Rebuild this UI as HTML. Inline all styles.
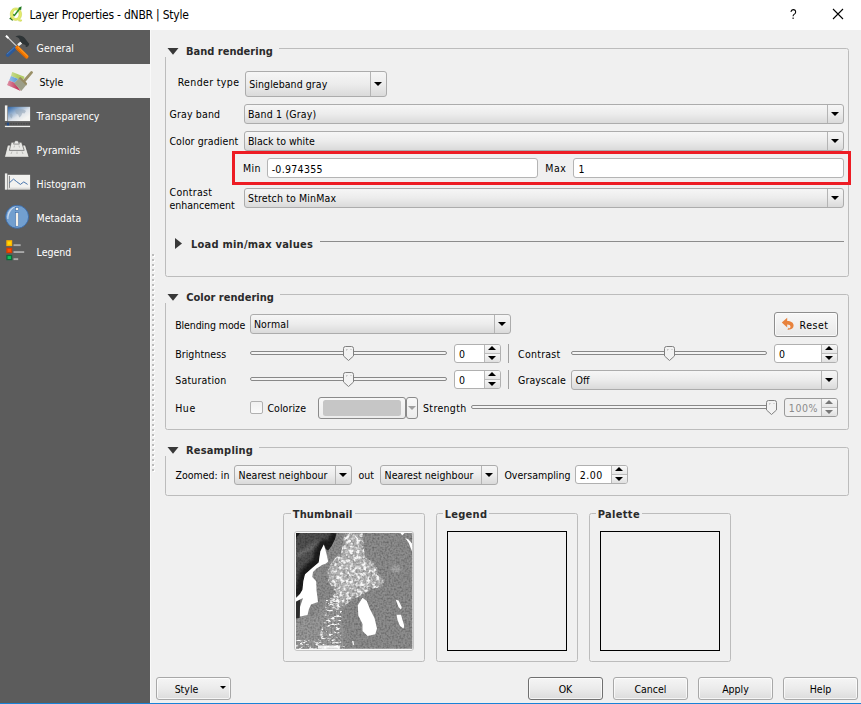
<!DOCTYPE html>
<html><head><meta charset="utf-8"><title>Layer Properties - dNBR | Style</title>
<style>
*{box-sizing:border-box;margin:0;padding:0}
html,body{width:861px;height:704px;overflow:hidden;background:#f0f0f0}
body{position:relative;font-family:"DejaVu Sans Condensed","DejaVu Sans","Liberation Sans",sans-serif;font-size:10.5px;color:#000}
.a{position:absolute;white-space:nowrap}
.t{position:absolute;white-space:nowrap;line-height:14px;height:14px}
.b{font-weight:bold;font-size:11px;color:#2b2b2b}
#title{left:0;top:0;width:861px;height:30px;background:#fff}
#title .tt{left:29.5px;top:7px;font-family:"DejaVu Sans Condensed","Liberation Sans",sans-serif;font-size:12px;letter-spacing:-.23px;line-height:16px;color:#000}
#side{left:0;top:30px;width:150px;height:674px;background:#5c5c5c}
.it{position:absolute;left:0;width:150px;height:34px;color:#fff}
.it .t{left:36.6px;top:11px}
.it.sel{background:#f0f0f0;color:#000}
.it.sel .t{left:39.5px}
.gb{position:absolute;border:1px solid #bcbcbc;border-radius:2.5px}
.hl{position:absolute;height:1px;background:#bdbdbd}
.combo{position:absolute;height:20px;border:1px solid #acacac;border-radius:3px;background:linear-gradient(#f6f6f6 0%,#ececec 50%,#dadada 100%)}
.combo .t{left:3px;top:2px}
#main .t{margin-left:.5px}
.combo i{position:absolute;right:15px;top:0;bottom:0;width:1px;background:#b4b4b4}
.combo b,.arr{position:absolute;width:0;height:0;border-left:4px solid transparent;border-right:4px solid transparent;border-top:4px solid #000}
.combo b{right:4px;top:7px}
.inp{position:absolute;height:20px;border:1px solid #b4b4b4;border-radius:3px;background:#fff}
.inp .t{left:4px;top:3px}
.btn{position:absolute;height:23px;border:1px solid #a8a8a8;box-shadow:inset 0 0 0 1px rgba(255,255,255,.7);border-radius:3px;background:linear-gradient(#f5f5f5 0%,#ebebeb 50%,#dcdcdc 100%);text-align:center;line-height:23px}
.spin{position:absolute;height:19px;border:1px solid #b0b0b0;border-radius:3px;background:#fff}
.spin .t{left:3.5px;top:2px}
.spin .sb{position:absolute;right:0;top:0;bottom:0;width:16px;border-left:1px solid #b8b8b8;background:linear-gradient(#f8f8f8 0,#e6e6e6 47%,#bcbcbc 47%,#bcbcbc 53%,#f6f6f6 53%,#e0e0e0 100%);border-radius:0 2px 2px 0}
.up{position:absolute;width:0;height:0;border-left:4px solid transparent;border-right:4px solid transparent;border-bottom:4px solid #000;left:3px;top:.5px}
.dn{position:absolute;width:0;height:0;border-left:4px solid transparent;border-right:4px solid transparent;border-top:4px solid #000;left:3px;top:10.5px}
.trk{position:absolute;height:4px;border:1px solid #888;border-radius:2px;background:#f4f4f4}
.hd{position:absolute;width:11px;height:15px}
.vs{position:absolute;width:1px;background:#a0a0a0}
.fr{position:absolute;border:1px solid #000}
</style></head><body>
<div id="title" class="a">
<svg class="a" style="left:0;top:0" width="30" height="30" viewBox="0 0 30 30"><path d="M9.800 19.200L14.200 14" stroke="#1e6b1e" stroke-width="1.100"></path><path d="M9.400 18.100l3.900.5-.9 2.400z" fill="#1e6b1e"></path><path d="M15.900 7.900c-3.300 0-5.600 2.800-5.600 6.300s2.200 6.200 5.500 6.200c.7 0 1.300-.1 1.900-.3.900.9 2 1.400 3.600 1.100l.5-1.300c-1 .1-1.700-.2-2.200-.7 1.300-1.100 2-2.900 2-5 0-3.500-2.300-6.300-5.700-6.300zm0 2c1.800 0 3.100 1.700 3.100 4.300s-1.300 4.300-3.100 4.300-3-1.700-3-4.300 1.200-4.300 3-4.300z" fill="#e3eb6b" stroke="#c3cf42" stroke-width=".5"></path><path d="M14 16L20 8.200" stroke="#2a8c2a" stroke-width="1.400"></path><path d="M21.600 6.200l-.5 4-3-2.300z" fill="#1f7a1f"></path></svg>
<span class="t tt">Layer Properties - dNBR | Style</span>
<span class="a" style="left:789.500px;top:6px;font-family:'Liberation Sans',sans-serif;font-size:14px;line-height:16px;transform:scaleX(.85);transform-origin:0 0">?</span>
<svg class="a" style="left:832px;top:8px" width="12" height="12" viewBox="0 0 12 12"><path d="M1 1l10 10M11 1L1 11" stroke="#000" stroke-width="1.100"></path></svg>
</div>
<div id="side" class="a">
<div class="it" style="top:0"><svg class="a" style="left:0;top:-2px" width="54" height="44" viewBox="0 0 54 44"><g transform="translate(.4 .7)"><path d="M5.700 7.100L16.600 17.900" stroke="#d0d0d0" stroke-width="1.200"></path><path d="M5.600 7L8 9.400" stroke="#fff" stroke-width="2"></path><path d="M7.400 26.200L15 19.200" stroke="#2c5a9a" stroke-width="3.900" stroke-linecap="round"></path><path d="M6.800 25.200L14 18.600" stroke="#4f80bf" stroke-width=".9" stroke-linecap="round"></path><path d="M17.600 16.600L21 13.800" stroke="#eeeeec" stroke-width="2.600"></path><path d="M15 8C18 6.200 22 6.600 24.500 9.600C26 11.600 27.500 13.600 28.800 15L28.400 16.600C27.400 18.200 26.400 18.500 25.300 18L25.100 16.200 22.300 15.400 19.400 12.400C19.700 10 18 8.400 15 8Z" fill="#2e3436"></path><path d="M16.800 18.800L26.200 28" stroke="#f57900" stroke-width="3.900" stroke-linecap="round"></path><path d="M17.800 18.200L27 27.200" stroke="#fcaf3e" stroke-width=".8" stroke-linecap="round"></path><path d="M16 19.800L25 28.800" stroke="#ce5c00" stroke-width=".8" stroke-linecap="round"></path></g></svg><span class="t">General</span></div>
<div class="it sel" style="top:34px"><svg class="a" style="left:0;top:-2px" width="54" height="44" viewBox="0 0 54 44"><defs><linearGradient id="sg" x1="0" x2="1"><stop offset="0" stop-color="#fff" stop-opacity=".45"></stop><stop offset=".6" stop-color="#fff" stop-opacity="0"></stop></linearGradient></defs><path d="M12.200 10L24.500 14.700 23.800 17.300 18.200 16.900 11 14.100Z" fill="#b3cd66"></path><path d="M11 14.100L18.200 16.900 14.700 20.700 9.100 18.500Z" fill="#5a9ad8"></path><path d="M9.100 18.500L14.700 20.700 20.700 28.900 7.200 22.900Z" fill="#c23a5e"></path><path d="M12.200 10L24.500 14.700 20.700 28.900 7.200 22.900Z" fill="url(#sg)"></path><path d="M24.200 19L31.600 10.400" stroke="#9a9068" stroke-width="2.700" stroke-linecap="round"></path><path d="M14.100 21.300L19.400 16 26.700 22.600 21.300 28.900Z" fill="#9c9e88"></path><path d="M18.600 16L20.600 14.900 27.100 21.300 26.400 23.600Z" fill="#968b62"></path></svg><span class="t">Style</span></div>
<div class="it" style="top:68px"><svg class="a" style="left:0;top:-2px" width="54" height="44" viewBox="0 0 54 44"><defs><linearGradient id="tg" x1="0" y1="0" x2="1" y2="1"><stop offset="0" stop-color="#2c63a6"></stop><stop offset=".28" stop-color="#86a6ca"></stop><stop offset=".55" stop-color="#dde3ea"></stop><stop offset=".8" stop-color="#f4f4f2"></stop></linearGradient></defs><rect x="4.900" y="9.400" width="2.500" height="15.600" fill="#f0f0ee"></rect><rect x="7.900" y="10.800" width="22.200" height="14.300" fill="url(#tg)"></rect><path d="M15 14.500c2-1.500 6-1.500 9-.8l2 1.200-1.500 2.500-2-.5-1.500 3-1.800 1.700-1-3-2.200-1.200zM9.500 18l2-.6 1.200 2-1 3.200-1.600-1.500z" fill="#8fa3b5" opacity=".55"></path><path d="M5 27.700H30" stroke="#4a4a4a" stroke-width="1.400" stroke-dasharray="1.600 1"></path><rect x="6.900" y="26.600" width="2.200" height="3.200" fill="#204a87"></rect><rect x="4.900" y="29.800" width="25.200" height="1.300" fill="#eeeeec"></rect></svg><span class="t">Transparency</span></div>
<div class="it" style="top:102px"><svg class="a" style="left:0;top:-2px" width="54" height="44" viewBox="0 0 54 44"><path d="M4.400 27.300H29.200L25.400 15.100H7.500Z" fill="#e6e6e3" stroke="#4a4a4a" stroke-width=".8"></path><path d="M9.400 20.400H24.200L21.600 12.200H11.300Z" fill="#e8e8e5" stroke="#5a5a5a" stroke-width=".7"></path><path d="M13.500 14.100H19.400L17.900 10.700H15.100Z" fill="#ececea" stroke="#555" stroke-width=".6"></path><path d="M11 24l1-2.500M17 24v-2.500M23 24l-1-2.500M14 17.500l.5-2M19.500 17.500l-.5-2" stroke="#b0b0ac" stroke-width=".8"></path></svg><span class="t">Pyramids</span></div>
<div class="it" style="top:136px"><svg class="a" style="left:0;top:-2px" width="54" height="44" viewBox="0 0 54 44"><rect x="4.900" y="9.400" width="2.400" height="16.300" fill="#ececea"></rect><rect x="7.800" y="10.800" width="22.300" height="14.600" fill="#f2f2f0"></rect><rect x="7.800" y="23.600" width="22.300" height="1.800" fill="#dcdcda"></rect><path d="M9.400 11.900V23.800" stroke="#666" stroke-width=".8"></path><path d="M9.400 18.800L13.500 15.100 16.600 17.600 20.400 20.400 23.800 17.900 27.600 20.400" stroke="#3465a4" stroke-width=".9" fill="none"></path></svg><span class="t">Histogram</span></div>
<div class="it" style="top:170px"><svg class="a" style="left:0;top:-2px" width="54" height="44" viewBox="0 0 54 44"><circle cx="17.100" cy="18.800" r="11.500" fill="#729fcf" stroke="#3465a4" stroke-width=".8"></circle><path d="M7.300 21C6.600 14 11 9 16.500 8.300C12 10.500 8.600 14.500 8.400 21Z" fill="#c4d6ec"></path><rect x="15.600" y="9.700" width="3" height="2.600" fill="#f5f1e8" stroke="#3465a4" stroke-width=".5"></rect><rect x="15.600" y="14.700" width="3" height="13.500" fill="#f5f1e8" stroke="#3465a4" stroke-width=".5"></rect></svg><span class="t">Metadata</span></div>
<div class="it" style="top:204px"><svg class="a" style="left:0;top:-2px" width="54" height="44" viewBox="0 0 54 44"><rect x="6.300" y="8.200" width="5.900" height="5.900" fill="#ffb400"></rect><rect x="7.700" y="9.600" width="3.100" height="3.100" fill="#ffdc00"></rect><rect x="6.300" y="15.700" width="5.900" height="5.400" fill="#d83c00"></rect><rect x="7.600" y="16.900" width="3.300" height="3" fill="#ff4e00"></rect><rect x="6.300" y="22.900" width="5.900" height="5.300" fill="#0a6a3a"></rect><rect x="7.600" y="24.100" width="3.300" height="2.900" fill="#12c45a"></rect><rect x="13.500" y="12.200" width="7.200" height="1.900" fill="#a8a8a8"></rect><rect x="13.500" y="19.100" width="10.700" height="1.900" fill="#a8a8a8"></rect><rect x="13.500" y="26.200" width="4.700" height="1.900" fill="#a8a8a8"></rect></svg><span class="t">Legend</span></div>
</div>
<div id="main">
<div class="a" style="left:150px;top:30px;width:1px;height:673px;background:#f9f9f9"></div>
<svg class="a" style="left:152px;top:254px" width="4" height="219"><defs><pattern id="sp" width="4" height="5" patternUnits="userSpaceOnUse"><rect x="1" y="1" width="2" height="2" fill="#fff"></rect><rect width="2" height="2" fill="#bcbcbc"></rect></pattern></defs><rect width="4" height="219" fill="url(#sp)"></rect></svg>
<!-- Band rendering -->
<div class="gb" style="left:165px;top:48px;width:684px;height:229px"></div>
<div class="a" style="left:164px;top:40px;width:115px;height:17px;background:#f0f0f0"></div>
<svg class="a" style="left:167px;top:47px" width="13" height="9"><path d="M.5 1h11L6 7.800z" fill="#383838"/></svg>
<span class="t b" style="left: 185.42px; top: 45px; letter-spacing: 0.02px;">Band rendering</span>

<span class="t" style="left: 177.15px; top: 75px; letter-spacing: 0.366px;">Render type</span>
<div class="combo" style="left:245px;top:71px;width:142px;height:26px"><span class="t" style="left: 2.81px; top: 5px; letter-spacing: 0.06px;">Singleband gray</span><i></i><b style="top:10px"></b></div>
<span class="t" style="left: 168.9px; top: 107px; letter-spacing: 0.172px;">Gray band</span>
<div class="combo" style="left:244px;top:104px;width:600px"><span class="t" style="left: 2.4px; letter-spacing: 0.182px;">Band 1 (Gray)</span><i></i><b></b></div>
<span class="t" style="left: 168.9px; top: 134px; letter-spacing: 0.104px;">Color gradient</span>
<div class="combo" style="left:244px;top:131px;width:600px"><span class="t" style="left: 2.4px; letter-spacing: -0.003px;">Black to white</span><i></i><b></b></div>
<span class="t" style="left: 242.4px; top: 161px; letter-spacing: 0.355px;">Min</span>
<div class="inp" style="left:267px;top:158px;width:271px"><span class="t" style="left: 3.15px; letter-spacing: 0.309px;">-0.974355</span></div>
<span class="t" style="left: 544.65px; top: 161px; letter-spacing: 0.591px;">Max</span>
<div class="inp" style="left:573px;top:158px;width:271px"><span class="t">1</span></div>
<div class="a" style="left:232px;top:151px;width:619px;height:34px;border:3px solid #ed1c24"></div>
<span class="t" style="left:169px;top:186px;line-height:13px;height:26px"><span style="letter-spacing:.3px">Contrast</span><br>enhancement</span>
<div class="combo" style="left:244px;top:188px;width:600px"><span class="t" style="left: 2.56px; letter-spacing: 0.132px;">Stretch to MinMax</span><i></i><b></b></div>
<div class="hl" style="left:320px;top:241px;width:524px;background:#8c8c8c"></div>
<svg class="a" style="left:174px;top:237px" width="9" height="13"><path d="M1 1v11L8 6.500z" fill="#383838"/></svg>
<span class="t b" style="left: 190.42px; top: 238px; letter-spacing: 0.24px;">Load min/max values</span>

<!-- Color rendering -->
<div class="gb" style="left:165px;top:294px;width:684px;height:136px"></div>
<div class="a" style="left:164px;top:286px;width:116px;height:17px;background:#f0f0f0"></div>
<svg class="a" style="left:167px;top:293px" width="13" height="9"><path d="M.5 1h11L6 7.800z" fill="#383838"/></svg>
<span class="t b" style="left: 185.68px; top: 291px; letter-spacing: 0.017px;">Color rendering</span>
<span class="t" style="left: 174.65px; top: 318px; letter-spacing: -0.097px;">Blending mode</span>
<div class="combo" style="left:250px;top:314px;width:261px"><span class="t" style="left: 2.4px; letter-spacing: 0.156px;">Normal</span><i></i><b></b></div>
<div class="btn" style="left:774px;top:312px;width:64px;height:25px;border-color:#8e8e8e;background:linear-gradient(#f8f8f8,#e8e8e8)"><span class="t" style="left:24px;top:5px;letter-spacing:.55px">Reset</span>
<svg class="a" style="left:6px;top:4px" width="14" height="14" viewBox="0 0 14 14"><path d="M6.200 .8L.8 5.600 6.200 10.400V7.600c2.100 0 3.300.8 3.300 2.100 0 .9-.7 1.600-1.800 1.700l-.3-.8-.9 2.100c3.800.4 6.100-1.400 6.100-4.100 0-2.900-2.600-4.600-6.400-4.600z" fill="#e8823c"/></svg></div>

<span class="t" style="left: 174.65px; top: 347px; letter-spacing: 0.074px;">Brightness</span>
<div class="trk" style="left:250px;top:351px;width:197px"></div>
<svg class="hd" style="left:343px;top:346px" viewBox="0 0 11 15"><path d="M2.500.5h6q2 0 2 2v7.500l-5 4.500-5-4.500V2.500q0-2 2-2z" fill="#f2f2f2" stroke="#808080"></path><path d="M3.500 4.500v-1h1M7.500 3.500h1" stroke="#b8b8b8" fill="none"></path></svg>
<div class="spin" style="left:454px;top:344px;width:47px"><span class="t">0</span><div class="sb"><div class="up"></div><div class="dn"></div></div></div>
<div class="vs" style="left:508px;top:344px;height:19px"></div>
<span class="t" style="left:517.600px;top:347px;letter-spacing:.25px">Contrast</span>
<div class="trk" style="left:571px;top:351px;width:196px"></div>
<svg class="hd" style="left:664px;top:346px" viewBox="0 0 11 15"><path d="M2.500.5h6q2 0 2 2v7.500l-5 4.500-5-4.500V2.500q0-2 2-2z" fill="#f2f2f2" stroke="#808080"></path><path d="M3.500 4.500v-1h1M7.500 3.500h1" stroke="#b8b8b8" fill="none"></path></svg>
<div class="spin" style="left:774px;top:344px;width:64px"><span class="t">0</span><div class="sb"><div class="up"></div><div class="dn"></div></div></div>

<span class="t" style="left: 174.81px; top: 373px; letter-spacing: 0.189px;">Saturation</span>
<div class="trk" style="left:250px;top:377px;width:197px"></div>
<svg class="hd" style="left:343px;top:372px" viewBox="0 0 11 15"><path d="M2.500.5h6q2 0 2 2v7.500l-5 4.500-5-4.500V2.500q0-2 2-2z" fill="#f2f2f2" stroke="#808080"></path><path d="M3.500 4.500v-1h1M7.500 3.500h1" stroke="#b8b8b8" fill="none"></path></svg>
<div class="spin" style="left:454px;top:370px;width:47px"><span class="t">0</span><div class="sb"><div class="up"></div><div class="dn"></div></div></div>
<div class="vs" style="left:508px;top:370px;height:19px"></div>
<span class="t" style="left: 517.5px; top: 373px; letter-spacing: 0.1px;">Grayscale</span>
<div class="combo" style="left:571px;top:370px;width:267px"><span class="t">Off</span><i></i><b></b></div>

<span class="t" style="left: 174.65px; top: 401px; letter-spacing: 0.608px;">Hue</span>
<div class="a" style="left:250px;top:401px;width:13px;height:13px;border:1px solid #b0b0b0;border-radius:2px;background:linear-gradient(#f0f0f0,#fafafa)"></div>
<span class="t" style="left: 266.9px; top: 401px; letter-spacing: 0.071px;">Colorize</span>
<div class="a" style="left:318px;top:397px;width:88px;height:22px;border:1px solid #8a8a8a;border-radius:3px;background:linear-gradient(#f8f8f8,#ececec)"><div class="a" style="left:3.500px;top:2px;width:78.500px;height:15.500px;background:#c6c6c6;border-radius:2.500px"></div></div>
<div class="a" style="left:406px;top:397px;width:12px;height:22px;border:1px solid #8a8a8a;border-radius:3px;background:linear-gradient(#f8f8f8,#ececec)"><div class="arr" style="left:1px;top:7.500px;border-top-width:4.500px;border-top-color:#a0a0a0"></div></div>
<span class="t" style="left: 422.56px; top: 401px; letter-spacing: 0.328px;">Strength</span>
<div class="trk" style="left:471px;top:405px;width:300px"></div>
<svg class="hd" style="left:766px;top:400px" viewBox="0 0 11 15"><path d="M2.500.5h6q2 0 2 2v7.500l-5 4.500-5-4.500V2.500q0-2 2-2z" fill="#f2f2f2" stroke="#808080"></path><path d="M3.500 4.500v-1h1M7.500 3.500h1" stroke="#b8b8b8" fill="none"></path></svg>
<div class="spin" style="left:784px;top:398px;width:54px;background:#f0f0f0;color:#8a8a8a;border-color:#9a9a9a"><span class="t" style="left: 3.3px; letter-spacing: 0.6px;">100%</span><div class="sb"><div class="up" style="border-bottom-color:#777"></div><div class="dn" style="border-top-color:#777"></div></div></div>

<!-- Resampling -->
<div class="gb" style="left:165px;top:447px;width:684px;height:49px"></div>
<div class="a" style="left:164px;top:439px;width:95px;height:17px;background:#f0f0f0"></div>
<svg class="a" style="left:167px;top:446px" width="13" height="9"><path d="M.5 1h11L6 7.800z" fill="#383838"/></svg>
<span class="t b" style="left: 185.42px; top: 444px; letter-spacing: 0.195px;">Resampling</span>
<span class="t" style="left: 175.02px; top: 468px; letter-spacing: 0.01px;">Zoomed: in</span>
<div class="combo" style="left:234px;top:465px;width:118px"><span class="t" style="letter-spacing:.07px">Nearest neighbour</span><i></i><b></b></div>
<span class="t" style="left:358px;top:468px">out</span>
<div class="combo" style="left:380px;top:465px;width:118px"><span class="t" style="letter-spacing:.07px">Nearest neighbour</span><i></i><b></b></div>
<span class="t" style="left: 503.9px; top: 468px; letter-spacing: 0.021px;">Oversampling</span>
<div class="spin" style="left:575px;top:465px;width:53px"><span class="t" style="left: 3.31px; letter-spacing: 0.509px;">2.00</span><div class="sb"><div class="up"></div><div class="dn"></div></div></div>

<!-- Thumbnail / Legend / Palette -->
<div class="gb" style="left:283px;top:513px;width:142px;height:149px"></div>
<span class="t b" style="left: 290.34px; top: 508px; background: rgb(240, 240, 240); padding: 0px 2px; letter-spacing: 0.104px;">Thumbnail</span>
<div class="gb" style="left:436px;top:513px;width:142px;height:149px"></div>
<span class="t b" style="left: 442.17px; top: 508px; background: rgb(240, 240, 240); padding: 0px 2px; letter-spacing: 0.285px;">Legend</span>
<div class="fr" style="left:447px;top:531px;width:120px;height:120px"></div>
<div class="gb" style="left:589px;top:513px;width:142px;height:149px"></div>
<span class="t b" style="left: 595.17px; top: 508px; background: rgb(240, 240, 240); padding: 0px 2px; letter-spacing: 0.345px;">Palette</span>
<div class="fr" style="left:600px;top:531px;width:120px;height:120px"></div>
<div id="thumb" class="a" style="left:294px;top:531px;width:120px;height:120px;border:1px solid #c4c4c4;border-radius:3px;background:#fafafa;overflow:hidden"><svg class="a" style="left:0;top:0" width="118" height="118" viewBox="295 532 118 118">
<defs>
<filter id="n1" x="0" y="0" width="100%" height="100%"><feTurbulence type="fractalNoise" baseFrequency=".55" numOctaves="1" seed="3"/><feColorMatrix type="matrix" values="0 0 0 0 0  0 0 0 0 0  0 0 0 0 0  2.200 0 0 0 -.9"/><feComposite in2="SourceGraphic" operator="in"/></filter>
<filter id="n2" x="0" y="0" width="100%" height="100%"><feTurbulence type="fractalNoise" baseFrequency=".55" numOctaves="1" seed="12"/><feColorMatrix type="matrix" values="0 0 0 0 1  0 0 0 0 1  0 0 0 0 1  2.200 0 0 0 -.95"/><feComposite in2="SourceGraphic" operator="in"/></filter>
<filter id="n3" x="0" y="0" width="100%" height="100%"><feTurbulence type="fractalNoise" baseFrequency=".3" numOctaves="2" seed="8"/><feColorMatrix type="matrix" values="0 0 0 0 1  0 0 0 0 1  0 0 0 0 1  4 0 0 0 -1.800"/><feComposite in2="SourceGraphic" operator="in"/></filter>
<filter id="n4" x="0" y="0" width="100%" height="100%"><feTurbulence type="fractalNoise" baseFrequency=".25 .5" numOctaves="2" seed="5"/><feColorMatrix type="matrix" values="0 0 0 0 1  0 0 0 0 1  0 0 0 0 1  5 0 0 0 -2.600"/><feComposite in2="SourceGraphic" operator="in"/></filter>
<filter id="b2"><feGaussianBlur stdDeviation="1.800"/></filter>
<filter id="b3"><feGaussianBlur stdDeviation="2.600"/></filter>
<clipPath id="cd"><path d="M296 533H336.500L335 539 331.500 546 328 550.500 326 549 323.800 544.500 320.400 551.300 318.700 562.400 312.800 567.500 305.100 574.300 303.400 581 302.500 589.700 300 594 296 598Z"/></clipPath>
<clipPath id="ci"><rect x="296" y="533" width="116.400" height="115.800"/></clipPath>
</defs>
<g clip-path="url(#ci)">
<rect x="296" y="533" width="117" height="116" fill="#8a8a8a"/>
<path d="M345.400 533H361.100L362.900 548.200 363.900 557.400 371.300 562.900 376.800 569.400 375.300 574.400 383.300 579.600 380.900 586 369.400 587.900 363.900 593.400 351.900 598 343.600 605.400 334 607.600 330.300 599.900 337.100 592.500 329.700 581.400 328.400 572.200 331.600 564.800 336.200 559.200 342.600 551.900 344.500 540.800Z" fill="#b2b2b2" filter="url(#b2)"/>
<path d="M296 612L312 618 330 598 340 600 342 622 346 649H296Z" fill="#969696" filter="url(#b3)"/>
<ellipse cx="396" cy="569" rx="5" ry="3.500" fill="#a8a8a8" filter="url(#b2)"/>
<rect x="296" y="533" width="117" height="116" fill="#4c4c4c" filter="url(#n1)" opacity=".3"/>
<rect x="296" y="533" width="117" height="116" fill="#fff" filter="url(#n2)" opacity=".1"/>
<path d="M344 533H362.500L364 548 365 557 372.500 562 378 569.400 376.500 574.400 384.500 579.600 382 587 370 589 364.500 594.500 352.500 599 344 606.500 333 608.800 329 600 336 592.500 328.500 581.400 327.200 572.200 330.500 564.500 335 558.500 341.500 551.500 343.300 540.800Z" fill="#fff" filter="url(#n3)" opacity=".9"/>
<path d="M326 600L338 596 342 610 340 630 346 649H296V640L318 640 324 622Z" fill="#fff" filter="url(#n4)" opacity=".95"/>
<g clip-path="url(#cd)"><rect x="296" y="533" width="42" height="66" fill="#505050"/><path d="M296 556L322 541" stroke="#6c6c6c" stroke-width="5" filter="url(#b2)"/><path d="M337 534L333 542 328 549 324 545 320 552 318 562 312 567 305 574 303 581 301 590 298 597" stroke="#1c1c1c" stroke-width="11" fill="none" stroke-linejoin="round" filter="url(#b2)"/><path d="M296 533l4 0-4 5z" fill="#1a1a1a"/><rect x="296" y="533" width="42" height="66" fill="#000" filter="url(#n1)" opacity=".35"/></g>
<path d="M296 601.500L300.300 599 300 607 299.600 618 296 618.500Z" fill="#2c2c2c"/>
<path d="M323.800 544.500L325.500 550 327 556 328.200 561.500 326 563.500 322 565 319 567 316.500 568.500 313 572 312.300 577 316.200 581.200 316.500 590 318 602 311 604.500 309 609 307.500 615 300 616.500 300 607 303 598 296 601.500V598L300 594 302.500 589.700 303.400 581 305.100 574.300 312.800 567.500 318.700 562.400 320.400 551.300Z" fill="#fff"/>
<path d="M362.500 597.700L366.800 601 369.800 608.800 374.500 618 377 628.400 375.300 634.300 367.600 636 362.500 631V624L358.300 615.600 357.800 605.300Z" fill="#fff"/>
<path d="M395.800 599.800L398.500 600.500 401.700 607 401 609.800 398.500 607ZM396.600 614.700H401L404.300 626 403.500 628.600 400 626 397.500 620Z" fill="#fff"/>
<path d="M400.500 533H404.500L402.200 535.500ZM405.200 538.100L408.600 539.400 412 543.600 412.400 552.200 410.300 547 408.600 542.800Z" fill="#fff"/>
<path d="M318 645.500h22v3.500h-22zM352 641l1.500 0 .8 4-1.500 0z" fill="#fff" opacity=".85"/>
</g></svg></div>

<!-- Buttons -->
<div class="btn" style="left:156px;top:677px;width:75px;padding-right:14px">Style<div class="arr" style="left:62.500px;top:8px;border-left-width:3.500px;border-right-width:3.500px;border-top-width:3.500px"></div></div>
<div class="btn" style="left:528px;top:677px;width:75px;border-color:#707070">OK</div>
<div class="btn" style="left:613px;top:677px;width:75px">Cancel</div>
<div class="btn" style="left:698px;top:677px;width:75px">Apply</div>
<div class="btn" style="left:783px;top:677px;width:75px">Help</div>
</div>
<div class="a" style="left:0;top:703px;width:861px;height:1px;background:#1883d7"></div>

</body></html>
